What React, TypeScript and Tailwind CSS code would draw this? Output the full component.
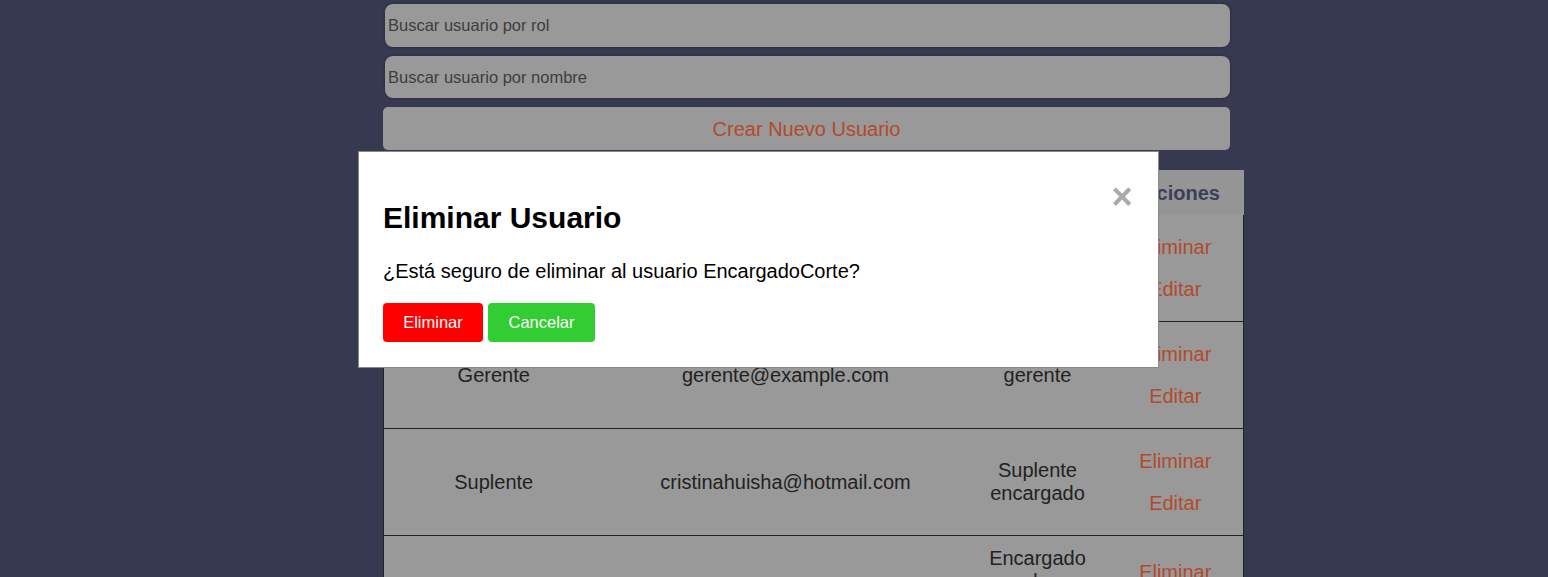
import React from "react";

const rows = [
  { name: "EncargadoCorte", email: "encargado@example.com", rol: "Encargado" },
  { name: "Gerente", email: "gerente@example.com", rol: "gerente" },
  { name: "Suplente", email: "cristinahuisha@hotmail.com", rol: "Suplente encargado" },
  { name: "Encargado", email: "encargado2@example.com", rol: "Encargado de Producción Textil" },
];

export default function App() {
  return (
    <div
      className="relative min-h-[577px] w-full overflow-hidden bg-[#363950] text-[#222]"
      style={{ fontFamily: '"Liberation Sans", Arial, sans-serif' }}
    >
      <div className="ml-[383px] w-[847px] pt-[4px] flex flex-col">
        <input
          placeholder="Buscar usuario por rol"
          className="ml-[2px] h-[43px] w-[845px] rounded-[8px] bg-[#999999] pl-[3px] text-[16.5px] text-[#333] placeholder:text-[#3d3d3d] outline-none shadow-[0_0_3px_rgba(0,0,0,0.35)]"
        />
        <input
          placeholder="Buscar usuario por nombre"
          className="ml-[2px] mt-[9px] h-[42px] w-[845px] rounded-[8px] bg-[#999999] pl-[3px] text-[16.5px] text-[#333] placeholder:text-[#3d3d3d] outline-none shadow-[0_0_3px_rgba(0,0,0,0.35)]"
        />
        <button className="mt-[9px] h-[43px] w-[847px] rounded-[5px] bg-[#999999] text-[20px] text-[#b24a2b]">
          Crear Nuevo Usuario
        </button>
      </div>

      <table className="ml-[383px] mt-[20px] w-[860px] table-fixed border-collapse text-[20px]">
        <colgroup>
          <col className="w-[220px]" />
          <col className="w-[364px]" />
          <col className="w-[140px]" />
          <col className="w-[136px]" />
        </colgroup>
        <thead>
          <tr className="h-[45px] bg-[#959595] text-[#3b3f58]">
            <th className="font-bold">Nombre</th>
            <th className="font-bold">Email</th>
            <th className="font-bold">Rol</th>
            <th className="font-bold">Acciones</th>
          </tr>
        </thead>
        <tbody>
          {rows.map((r) => (
            <tr key={r.email} className="border-x border-b border-[#222] bg-[#999999] text-center">
              <td className="px-[12px] py-[11px]">{r.name}</td>
              <td className="px-[12px] py-[11px]">{r.email}</td>
              <td className="px-[12px] py-[11px] leading-[23px]">{r.rol}</td>
              <td className="px-[5px] py-[11px]">
                <div className="flex flex-col items-center text-[#b24a2b]">
                  <button className="h-[42px]">Eliminar</button>
                  <button className="h-[42px]">Editar</button>
                </div>
              </td>
            </tr>
          ))}
        </tbody>
      </table>

      <div className="absolute left-[358px] top-[151px] w-[801px] border border-[#888] bg-white px-[24px] pt-[49px] pb-[25px] text-black">
        <button className="absolute right-[24px] top-[33px] flex h-[24px] w-[24px] items-center justify-center text-[36px] font-bold leading-none text-[#aaaaaa]">
          ×
        </button>
        <h2 className="text-[30px] font-bold leading-[34px]">Eliminar Usuario</h2>
        <p className="mt-[25px] text-[20px] leading-[23px]">
          ¿Está seguro de eliminar al usuario EncargadoCorte?
        </p>
        <div className="mt-[20px] flex gap-[5px]">
          <button className="h-[39px] w-[100px] rounded-[4px] bg-[#ff0000] text-[16.5px] text-white">
            Eliminar
          </button>
          <button className="h-[39px] w-[107px] rounded-[4px] bg-[#32cd32] text-[16.5px] text-white">
            Cancelar
          </button>
        </div>
      </div>
    </div>
  );
}
